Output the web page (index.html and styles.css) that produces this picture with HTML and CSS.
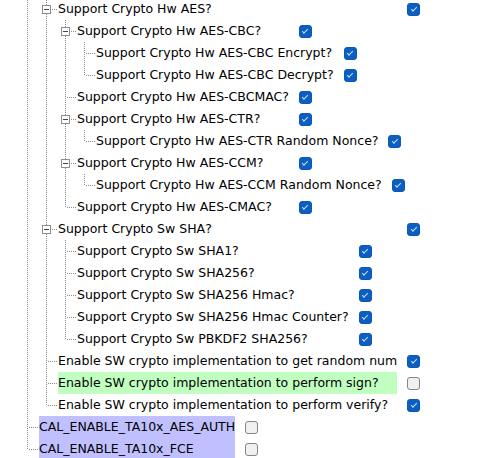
FILE: index.html
```html
<!DOCTYPE html>
<html>
<head>
<meta charset="utf-8">
<link rel="stylesheet" href="styles.css">
</head>
<body>
<div class="tree">
  <div class="group">
    <div class="sub">
      <div class="group">
        <div class="conn"><svg class="exp" width="9" height="9" viewBox="0 0 9 9"><rect x="0.5" y="0.5" width="8" height="8" fill="#fff" stroke="#8e8e8e"/><path d="M2 4.5h5" stroke="#444"/></svg></div>
        <div class="label">Support Crypto Hw AES?</div><span class="cb on"></span>
        <div class="sub">
          <div class="group">
            <div class="conn"><svg class="exp" width="9" height="9" viewBox="0 0 9 9"><rect x="0.5" y="0.5" width="8" height="8" fill="#fff" stroke="#8e8e8e"/><path d="M2 4.5h5" stroke="#444"/></svg></div>
            <div class="label">Support Crypto Hw AES-CBC?</div><span class="cb on"></span>
            <div class="sub">
              <div class="group">
                <div class="conn"></div><div class="label">Support Crypto Hw AES-CBC Encrypt?</div><span class="cb on"></span>
                <div class="conn last"></div><div class="label">Support Crypto Hw AES-CBC Decrypt?</div><span class="cb on"></span>
              </div>
            </div>
            <div class="conn"></div><div class="label">Support Crypto Hw AES-CBCMAC?</div><span class="cb on"></span>
            <div class="conn"><svg class="exp" width="9" height="9" viewBox="0 0 9 9"><rect x="0.5" y="0.5" width="8" height="8" fill="#fff" stroke="#8e8e8e"/><path d="M2 4.5h5" stroke="#444"/></svg></div>
            <div class="label">Support Crypto Hw AES-CTR?</div><span class="cb on"></span>
            <div class="sub">
              <div class="group">
                <div class="conn last"></div><div class="label">Support Crypto Hw AES-CTR Random Nonce?</div><span class="cb on"></span>
              </div>
            </div>
            <div class="conn"><svg class="exp" width="9" height="9" viewBox="0 0 9 9"><rect x="0.5" y="0.5" width="8" height="8" fill="#fff" stroke="#8e8e8e"/><path d="M2 4.5h5" stroke="#444"/></svg></div>
            <div class="label">Support Crypto Hw AES-CCM?</div><span class="cb on"></span>
            <div class="sub">
              <div class="group">
                <div class="conn last"></div><div class="label">Support Crypto Hw AES-CCM Random Nonce?</div><span class="cb on"></span>
              </div>
            </div>
            <div class="conn last"></div><div class="label">Support Crypto Hw AES-CMAC?</div><span class="cb on"></span>
          </div>
        </div>
        <div class="conn"><svg class="exp" width="9" height="9" viewBox="0 0 9 9"><rect x="0.5" y="0.5" width="8" height="8" fill="#fff" stroke="#8e8e8e"/><path d="M2 4.5h5" stroke="#444"/></svg></div>
        <div class="label">Support Crypto Sw SHA?</div><span class="cb on"></span>
        <div class="sub">
          <div class="group">
            <div class="conn"></div><div class="label">Support Crypto Sw SHA1?</div><span class="cb on"></span>
            <div class="conn"></div><div class="label">Support Crypto Sw SHA256?</div><span class="cb on"></span>
            <div class="conn"></div><div class="label">Support Crypto Sw SHA256 Hmac?</div><span class="cb on"></span>
            <div class="conn"></div><div class="label">Support Crypto Sw SHA256 Hmac Counter?</div><span class="cb on"></span>
            <div class="conn last"></div><div class="label">Support Crypto Sw PBKDF2 SHA256?</div><span class="cb on"></span>
          </div>
        </div>
        <div class="conn"></div><div class="label">Enable SW crypto implementation to get random num</div><span class="cb on"></span>
        <div class="conn"></div><div class="label hl-green">Enable SW crypto implementation to perform sign?</div><span class="cb"></span>
        <div class="conn last"></div><div class="label">Enable SW crypto implementation to perform verify?</div><span class="cb on"></span>
      </div>
    </div>
    <div class="conn"></div><div class="label hl-blue">CAL_ENABLE_TA10x_AES_AUTH</div><span class="cb"></span>
    <div class="conn last"></div><div class="label hl-blue">CAL_ENABLE_TA10x_FCE</div><span class="cb"></span>
  </div>
</div>
</body>
</html>
```
FILE: styles.css
```css
html, body {
  margin: 0;
  padding: 0;
  background: #fff;
  overflow: hidden;
}
body {
  font-family: "DejaVu Sans", Verdana, sans-serif;
  font-size: 12.5px;
  color: #000;
}
.tree {
  padding-left: 27px;
  margin-top: -2px;
}
.group {
  display: grid;
  grid-template-columns: 12px max-content 13px;
  width: max-content;
}
.conn {
  height: 22px;
  background:
    repeating-linear-gradient(to right, #8a8a8a 0 1px, transparent 1px 2px) 2px 11px / 9px 1px no-repeat,
    repeating-linear-gradient(#8a8a8a 0 1px, transparent 1px 2px) 0 0 / 1px 100% no-repeat;
}
.conn.last {
  background-size: 9px 1px, 1px 12px;
}
.exp {
  display: block;
  margin: 7px 0 0 -4px;
}
.label {
  line-height: 22px;
  height: 22px;
  white-space: nowrap;
  margin-right: 10px;
}
.hl-green { background: #c0ffc0; }
.hl-blue { background: #c0c0ff; }
.sub {
  grid-column: 1 / -1;
  padding-left: 19px;
  contain: inline-size;
  background: repeating-linear-gradient(#8a8a8a 0 1px, transparent 1px 2px) 0 0 / 1px 100% no-repeat;
}
.cb {
  width: 13px;
  height: 13px;
  box-sizing: border-box;
  border-radius: 3px;
  align-self: center;
  border: 1px solid #858585;
  background: #f0f0f0;
}
.cb.on {
  border-color: #0a58b8;
  background: #0b5fc2;
  display: flex;
  align-items: center;
  justify-content: center;
}
.cb.on::after {
  content: "";
  width: 5px;
  height: 2px;
  border-left: 1.2px solid #d4e0f2;
  border-bottom: 1.2px solid #d4e0f2;
  transform: translate(0, -1px) rotate(-45deg);
}
```
